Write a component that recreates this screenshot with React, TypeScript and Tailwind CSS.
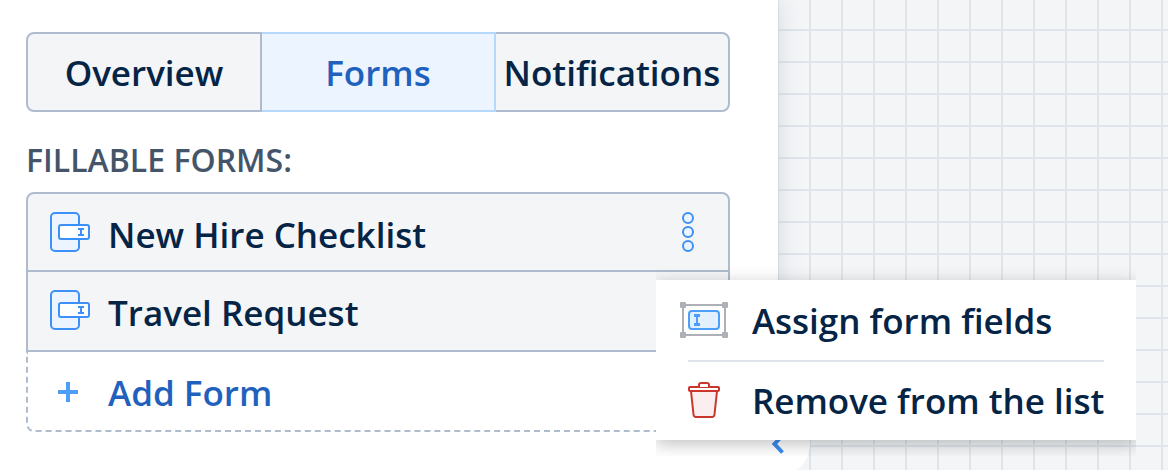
import React, { useState } from 'react';

const tabs = ['Overview', 'Forms', 'Notifications'];

const FormIcon = () => (
    <svg width="40" height="40" viewBox="0 0 40 40" fill="none" stroke="#3d90f7" strokeWidth="2" className="shrink-0" aria-hidden="true">
        <rect x="1" y="1" width="28" height="38" rx="4" fill="#ecf4ff" />
        <rect x="9" y="13" width="30" height="14" rx="2" fill="#fff" />
        <path d="M28 17h6M28 23h6M31 17v6" />
    </svg>
);

const PlusIcon = () => (
    <svg width="40" height="40" viewBox="0 0 40 40" fill="none" stroke="#4f9ff8" strokeWidth="4" className="shrink-0" aria-hidden="true">
        <path d="M8 20h20M18 10v20" />
    </svg>
);

const DotsIcon = () => (
    <svg width="40" height="40" viewBox="0 0 40 40" fill="#ecf4ff" stroke="#3d90f7" strokeWidth="2" aria-hidden="true">
        <circle cx="20" cy="6" r="5" />
        <circle cx="20" cy="20" r="5" />
        <circle cx="20" cy="34" r="5" />
    </svg>
);

const FieldIcon = () => (
    <svg width="48" height="36" viewBox="0 0 48 36" fill="none" className="shrink-0" aria-hidden="true">
        <rect x="3" y="3" width="42" height="30" stroke="#adb0b7" strokeWidth="2" />
        <g fill="#adb0b7">
            <rect width="6" height="6" rx="1" />
            <rect x="42" width="6" height="6" rx="1" />
            <rect y="30" width="6" height="6" rx="1" />
            <rect x="42" y="30" width="6" height="6" rx="1" />
        </g>
        <rect x="9" y="9" width="30" height="18" rx="3" fill="#e2effd" stroke="#4c9ff9" strokeWidth="2" />
        <path d="M14 12h6v3h-2v6h2v3h-6v-3h2v-6h-2z" fill="#4c9ff9" />
    </svg>
);

const TrashIcon = () => (
    <svg width="48" height="36" viewBox="0 0 48 36" stroke="#c9372c" strokeWidth="2" strokeLinejoin="round" className="shrink-0" aria-hidden="true">
        <path d="M11 9l2.500 23.500q.3 2.500 2.500 2.500h16q2.200 0 2.500-2.500L37 9z" fill="#faeeee" />
        <rect x="9" y="5" width="30" height="4" rx="1" fill="#fff" />
        <path d="M19 5V3q0-2 2-2h6q2 0 2 2v2" fill="#fff" />
    </svg>
);

const FormMenu = () => (
    <div role="menu" className="absolute top-[68px] -left-3 w-[480px] bg-white shadow-[0_4px_16px_rgba(0,0,0,0.25)] [clip-path:inset(-16px_0)]">
        <button type="button" role="menuitem" className="flex h-20 w-full items-center gap-6 px-6 whitespace-nowrap">
            <FieldIcon />
            <span className="pt-0.5">Assign form fields</span>
        </button>
        <hr className="mx-8 -mb-0.5 h-0.5 border-0 bg-[#dfe4ec]" />
        <button type="button" role="menuitem" className="flex h-20 w-full items-center gap-6 px-6 whitespace-nowrap">
            <TrashIcon />
            <span className="pt-0.5">Remove from the list</span>
        </button>
    </div>
);

const App: React.FC = () => {
    const [activeTab, setActiveTab] = useState('Forms');

    return (
        <main className="flex min-h-screen overflow-hidden bg-white font-['Open_Sans','Noto_Sans',sans-serif] text-[35px] leading-10 font-semibold text-[#052446]">
            {/* Side panel */}
            <section className="relative z-10 w-[66.6%] bg-white pt-8 pr-12 pb-[38px] pl-[26px] shadow-[0_0_24px_rgba(60,70,90,0.14)]">
                <div role="tablist" className="flex h-20">
                    {tabs.map((tab) => (
                        <button
                            key={tab}
                            type="button"
                            role="tab"
                            aria-selected={tab === activeTab}
                            onClick={() => setActiveTab(tab)}
                            className={`relative -ml-0.5 flex min-w-0 flex-1 items-center justify-center border-2 pt-0.5 first:z-20 first:ml-0 first:rounded-l-lg last:z-0 last:rounded-r-lg ${
                                tab === activeTab ? 'z-10 border-[#b6d9fb] bg-[#ecf5ff] text-[#1f61bd]' : 'border-[#afbccd] bg-[#f3f5f7]'
                            }`}
                        >
                            {tab}
                        </button>
                    ))}
                </div>

                <h2 className="pt-4 text-[32px] leading-[64px] text-[#44556a] uppercase">Fillable forms:</h2>

                <ul>
                    <li className="flex h-20 items-center gap-[18px] rounded-t-lg border-2 border-[#afbccd] bg-[#f3f5f7] pr-5 pl-[22px]">
                        <FormIcon />
                        <span className="flex-1 pt-1.5">New Hire Checklist</span>
                        <div className="relative size-10">
                            <button type="button" aria-label="Form actions" className="block">
                                <DotsIcon />
                            </button>
                            <FormMenu />
                        </div>
                    </li>
                    <li className="flex h-20 items-center gap-[18px] border-x-2 border-b-2 border-[#afbccd] bg-[#f3f5f7] pr-5 pb-0.5 pl-[22px]">
                        <FormIcon />
                        <span className="pt-1.5">Travel Request</span>
                    </li>
                    <li>
                        <button type="button" className="flex h-20 w-full items-center gap-[18px] rounded-b-lg border-x-2 border-b-2 border-dashed border-[#afbccd] pt-0.5 pl-[22px] text-[#1f61bd]">
                            <PlusIcon />
                            <span className="pt-0.5">Add Form</span>
                        </button>
                    </li>
                </ul>

                {/* Collapse handle */}
                <button type="button" aria-label="Collapse panel" className="absolute -right-8 -bottom-1.5 -z-10 flex size-16 items-center justify-center rounded-full bg-white">
                    <svg width="16" height="24" viewBox="0 0 16 24" fill="none" stroke="#3a8cf0" strokeWidth="4" aria-hidden="true">
                        <path d="M12.500 3.500L4.500 12l8 8.500" />
                    </svg>
                </button>
            </section>

            {/* Document canvas */}
            <section
                aria-label="Canvas"
                className="flex-1 bg-[#f3f5f7] bg-[linear-gradient(to_left,#dfe5eb_2px,transparent_2px),linear-gradient(to_top,#dfe5eb_2px,transparent_2px)] bg-[size:32px_32px] bg-position-[1px_-1px]"
            />
        </main>
    );
};

export default App;
